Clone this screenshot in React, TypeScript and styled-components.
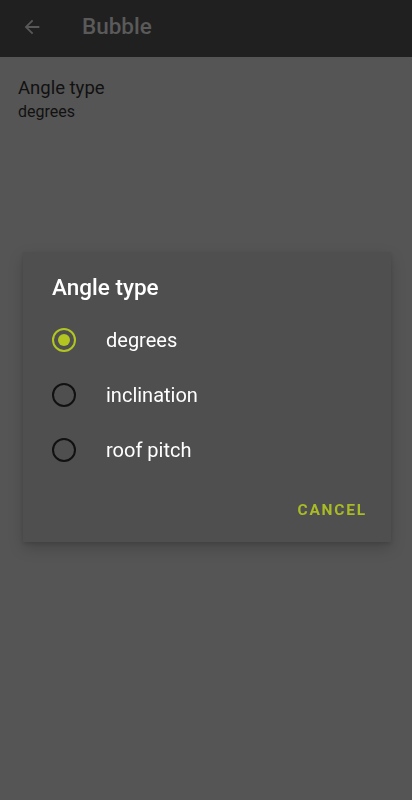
import { useState } from "react";
import styled, { createGlobalStyle } from "styled-components";

const GlobalStyle = createGlobalStyle`
  html, body {
    margin: 0;
    padding: 0;
    background-color: #555555;
    font-family: Roboto, "Noto Sans", sans-serif;
  }
`;

const options = ["degrees", "inclination", "roof pitch"];

export default function App() {
  const [selected, setSelected] = useState(0);

  return (
    <Container>
      <GlobalStyle />
      <Toolbar>
        <BackButton aria-label="back">
          <svg width="22" height="22" viewBox="0 0 24 24">
            <path
              d="M20 11H7.83l5.59-5.59L12 4l-8 8 8 8 1.41-1.41L7.83 13H20v-2z"
              fill="#585858"
            />
          </svg>
        </BackButton>
        <ToolbarTitle>Bubble</ToolbarTitle>
      </Toolbar>

      <MainContent>
        <SettingTitle>Angle type</SettingTitle>
        <SettingValue>{options[selected]}</SettingValue>
      </MainContent>

      <Overlay>
        <Dialog>
          <DialogTitle>Angle type</DialogTitle>
          <OptionList>
            {options.map((option, i) => (
              <OptionRow key={option} onClick={() => setSelected(i)}>
                <Radio $checked={i === selected} />
                <OptionLabel>{option}</OptionLabel>
              </OptionRow>
            ))}
          </OptionList>
          <DialogActions>
            <TextButton>CANCEL</TextButton>
          </DialogActions>
        </Dialog>
      </Overlay>
    </Container>
  );
}

const Container = styled.div`
  min-height: 800px;
  background-color: #555555;
  display: flex;
  flex-direction: column;
`;

const Toolbar = styled.header`
  height: 57px;
  background-color: #202020;
  display: flex;
  align-items: center;
  padding-left: 21px;
  gap: 39px;
`;

const BackButton = styled.div`
  width: 22px;
  height: 22px;
  display: flex;
  margin-top: -4px;
`;

const ToolbarTitle = styled.h1`
  margin: 0 0 6px 0;
  font-size: 22.5px;
  font-weight: 500;
  color: #5a5a5a;
`;

const MainContent = styled.main`
  padding: 20px 18px;
  display: flex;
  flex-direction: column;
  gap: 3px;
`;

const SettingTitle = styled.div`
  font-size: 18.5px;
  color: #111111;
`;

const SettingValue = styled.div`
  font-size: 16px;
  color: #111111;
`;

const Overlay = styled.div`
  position: fixed;
  inset: 0;
  display: flex;
  justify-content: center;
  align-items: flex-start;
  padding-top: 252px;
`;

const Dialog = styled.div`
  width: 368px;
  margin-left: 2px;
  background-color: #4f4f4f;
  box-shadow: 0 6px 14px rgba(0, 0, 0, 0.18), 0 2px 4px rgba(0, 0, 0, 0.12);
  padding: 22px 0 15px 0;
  box-sizing: border-box;
`;

const DialogTitle = styled.h2`
  margin: 0 0 12px 29px;
  font-size: 22.5px;
  font-weight: 500;
  color: #ffffff;
`;

const OptionList = styled.div`
  display: flex;
  flex-direction: column;
`;

const OptionRow = styled.div`
  height: 55px;
  display: flex;
  align-items: center;
  padding-left: 29px;
  gap: 30px;
  cursor: pointer;
`;

const Radio = styled.span<{ $checked: boolean }>`
  width: 24px;
  height: 24px;
  box-sizing: border-box;
  border-radius: 50%;
  border: 2px solid ${(p) => (p.$checked ? "#b2c520" : "#111111")};
  display: flex;
  align-items: center;
  justify-content: center;

  &::after {
    content: "";
    width: 12px;
    height: 12px;
    border-radius: 50%;
    background-color: #b2c520;
    display: ${(p) => (p.$checked ? "block" : "none")};
  }
`;

const OptionLabel = styled.span`
  font-size: 20px;
  color: #ffffff;
`;

const DialogActions = styled.div`
  display: flex;
  justify-content: flex-end;
  padding: 16px 22px 0 0;
`;

const TextButton = styled.button`
  background: none;
  border: none;
  padding: 8px 2px;
  font-family: Roboto, "Noto Sans", sans-serif;
  font-size: 15.5px;
  font-weight: 700;
  letter-spacing: 1.8px;
  color: #a9bb25;
  cursor: pointer;
`;
